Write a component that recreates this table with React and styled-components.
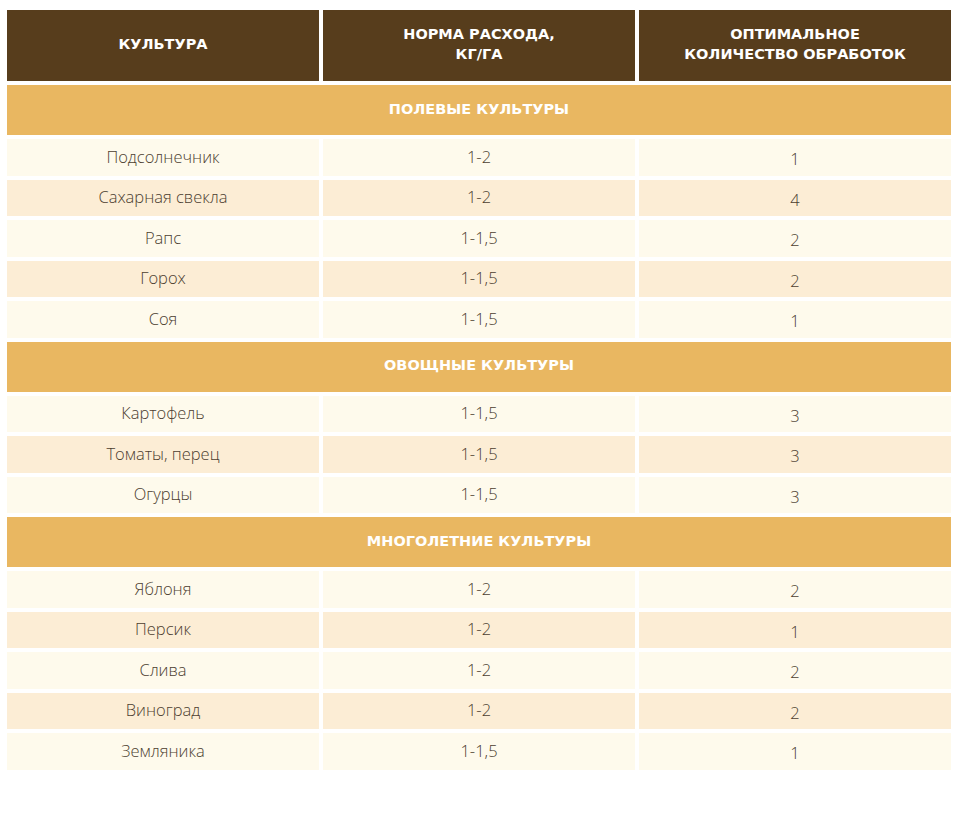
import React from "react";
import styled, { createGlobalStyle } from "styled-components";

const GlobalStyle = createGlobalStyle`
  body {
    margin: 0;
    background: #ffffff;
    font-family: "Open Sans", "Noto Sans", sans-serif;
  }
`;

const sections = [
  {
    title: "Полевые культуры",
    rows: [
      ["Подсолнечник", "1-2", "1"],
      ["Сахарная свекла", "1-2", "4"],
      ["Рапс", "1-1,5", "2"],
      ["Горох", "1-1,5", "2"],
      ["Соя", "1-1,5", "1"],
    ],
  },
  {
    title: "Овощные культуры",
    rows: [
      ["Картофель", "1-1,5", "3"],
      ["Томаты, перец", "1-1,5", "3"],
      ["Огурцы", "1-1,5", "3"],
    ],
  },
  {
    title: "Многолетние культуры",
    rows: [
      ["Яблоня", "1-2", "2"],
      ["Персик", "1-2", "1"],
      ["Слива", "1-2", "2"],
      ["Виноград", "1-2", "2"],
      ["Земляника", "1-1,5", "1"],
    ],
  },
];

function App() {
  return (
    <Page>
      <GlobalStyle />
      <Table>
        <HeadCell>Культура</HeadCell>
        <HeadCell>
          Норма расхода,
          <br />
          кг/га
        </HeadCell>
        <HeadCell>
          Оптимальное
          <br />
          количество обработок
        </HeadCell>

        {sections.map((section) => (
          <React.Fragment key={section.title}>
            <SectionCell>{section.title}</SectionCell>
            {section.rows.map((row, i) =>
              row.map((value, j) => (
                <Cell key={section.title + i + j} $alt={i % 2 === 1} $num={j === 2}>
                  {value}
                </Cell>
              ))
            )}
          </React.Fragment>
        ))}
      </Table>
    </Page>
  );
}

const Page = styled.div`
  padding: 10px 3px 40px 7px;
  width: 944px;
`;

const Table = styled.div`
  display: grid;
  grid-template-columns: repeat(3, 1fr);
  gap: 4px;
`;

const HeadCell = styled.div`
  height: 71px;
  box-sizing: border-box;
  padding-bottom: 3px;
  display: flex;
  align-items: center;
  justify-content: center;
  text-align: center;
  background-color: #573d1c;
  color: #ffffff;
  font-family: "DejaVu Sans", "Open Sans", sans-serif;
  font-weight: bold;
  font-size: 14.5px;
  line-height: 20px;
  text-transform: uppercase;
`;

const SectionCell = styled.div`
  grid-column: 1 / -1;
  height: 50px;
  box-sizing: border-box;
  padding-bottom: 3px;
  display: flex;
  align-items: center;
  justify-content: center;
  background-color: #e9b761;
  color: #ffffff;
  font-family: "DejaVu Sans", "Open Sans", sans-serif;
  font-weight: bold;
  font-size: 14.5px;
  text-transform: uppercase;
`;

const Cell = styled.div`
  height: 36.5px;
  display: flex;
  align-items: center;
  justify-content: center;
  padding-top: ${(p) => (p.$num ? "3px" : "0")};
  padding-bottom: ${(p) => (p.$num ? "0" : "2px")};
  box-sizing: border-box;
  background-color: ${(p) => (p.$alt ? "#fcedd5" : "#fefaec")};
  color: #4c3e30;
  font-size: 16.5px;
  font-weight: 300;
`;

export default App;
